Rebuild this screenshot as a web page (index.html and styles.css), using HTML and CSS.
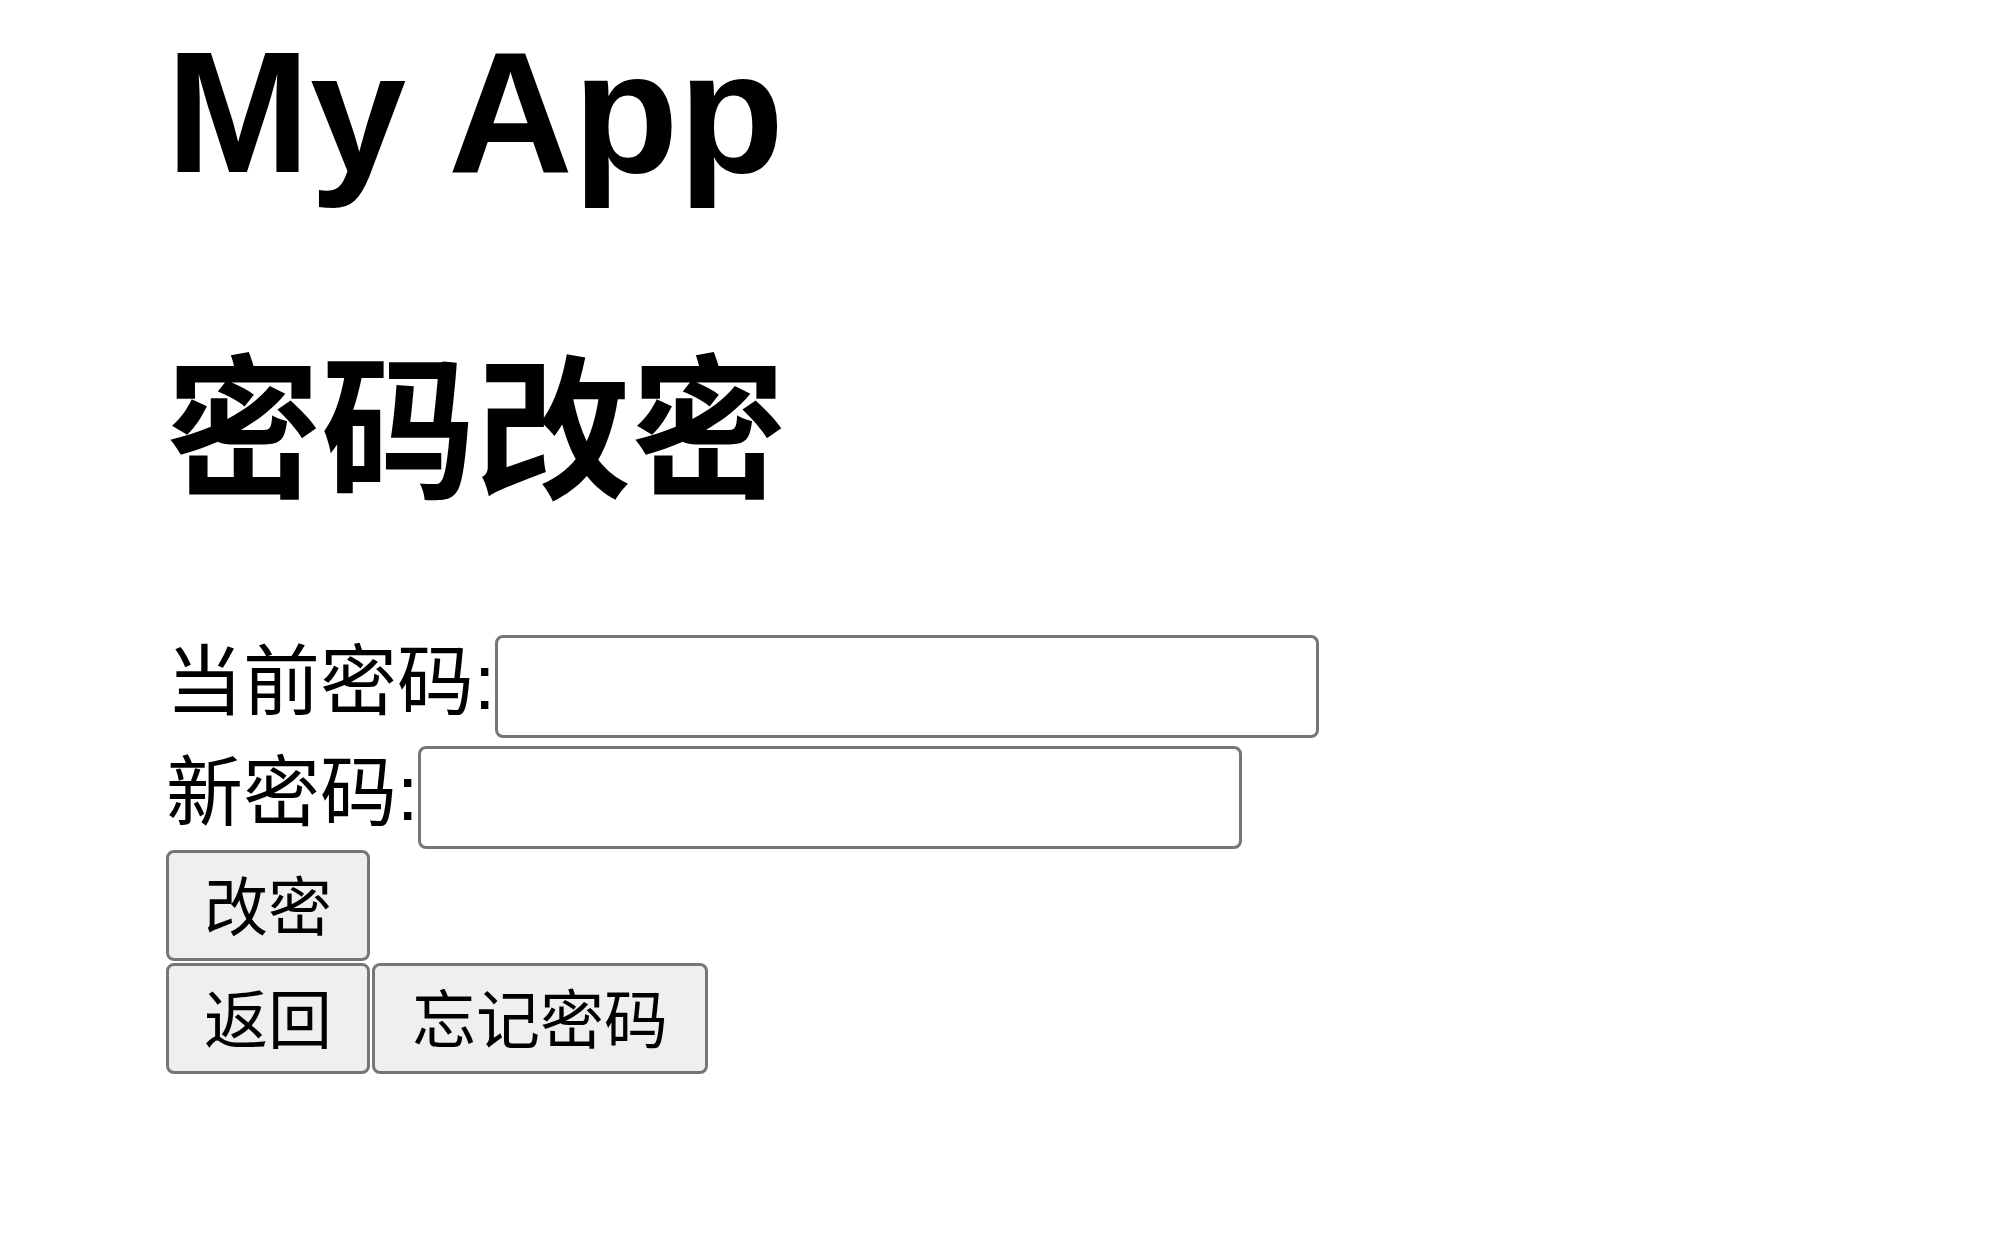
FILE: index.html
```html
<!DOCTYPE html>
<html lang="zh-CN">
<head>
    <meta charset="UTF-8">
    <meta name="viewport" content="width=device-width, initial-scale=1.0">
    <title>My App - 密码改密</title>
    <link rel="stylesheet" href="styles.css">
</head>
<body>

<div class="page">
    <h1 class="app-title">My App</h1>
    <h2 class="page-title">密码改密</h2>

    <form class="pwd-form" id="pwdForm">
        <div class="field">
            <label for="oldPwd">当前密码:</label><input type="password" id="oldPwd">
        </div>
        <div class="field">
            <label for="newPwd">新密码:</label><input type="password" id="newPwd">
        </div>
        <div class="actions first">
            <button type="submit" class="btn">改密</button>
        </div>
        <div class="actions">
            <button type="button" class="btn">返回</button>
            <button type="button" class="btn wide">忘记密码</button>
        </div>
    </form>
</div>

</body>
</html>
```

FILE: styles.css
```css
body {
    margin: 0;
    font-family: "Liberation Sans", "Noto Sans CJK SC", sans-serif;
    color: #000;
    background: #fff;
}
.page {
    padding-left: 166px;
}
.app-title {
    font-size: 173px;
    line-height: 1;
    margin: 26px 0 0;
}
.page-title {
    font-size: 155px;
    line-height: 1;
    margin: 156px 0 0;
}
.pwd-form {
    display: flex;
    flex-direction: column;
    align-items: flex-start;
    margin-top: 125px;
}
.field {
    display: flex;
    align-items: center;
    height: 103px;
}
.field + .field {
    margin-top: 8px;
}
.field label {
    font-size: 77px;
    line-height: 1;
    padding-bottom: 8px;
}
.field input {
    box-sizing: border-box;
    width: 824px;
    height: 103px;
    margin: 0;
    padding: 0 8px;
    border: 3px solid #767676;
    border-radius: 8px;
    background: #fff;
    font-size: 64px;
}
.actions {
    display: flex;
    gap: 2px;
    margin-top: 2px;
}
.actions.first {
    margin-top: 1px;
}
.btn {
    box-sizing: border-box;
    height: 111px;
    margin: 0;
    padding: 4px 35px 0;
    font-family: inherit;
    font-size: 64px;
    line-height: 1;
    color: #000;
    background-color: #efefef;
    border: 3px solid #767676;
    border-radius: 8px;
}
.btn.wide {
    padding: 4px 37px 0;
}
```
